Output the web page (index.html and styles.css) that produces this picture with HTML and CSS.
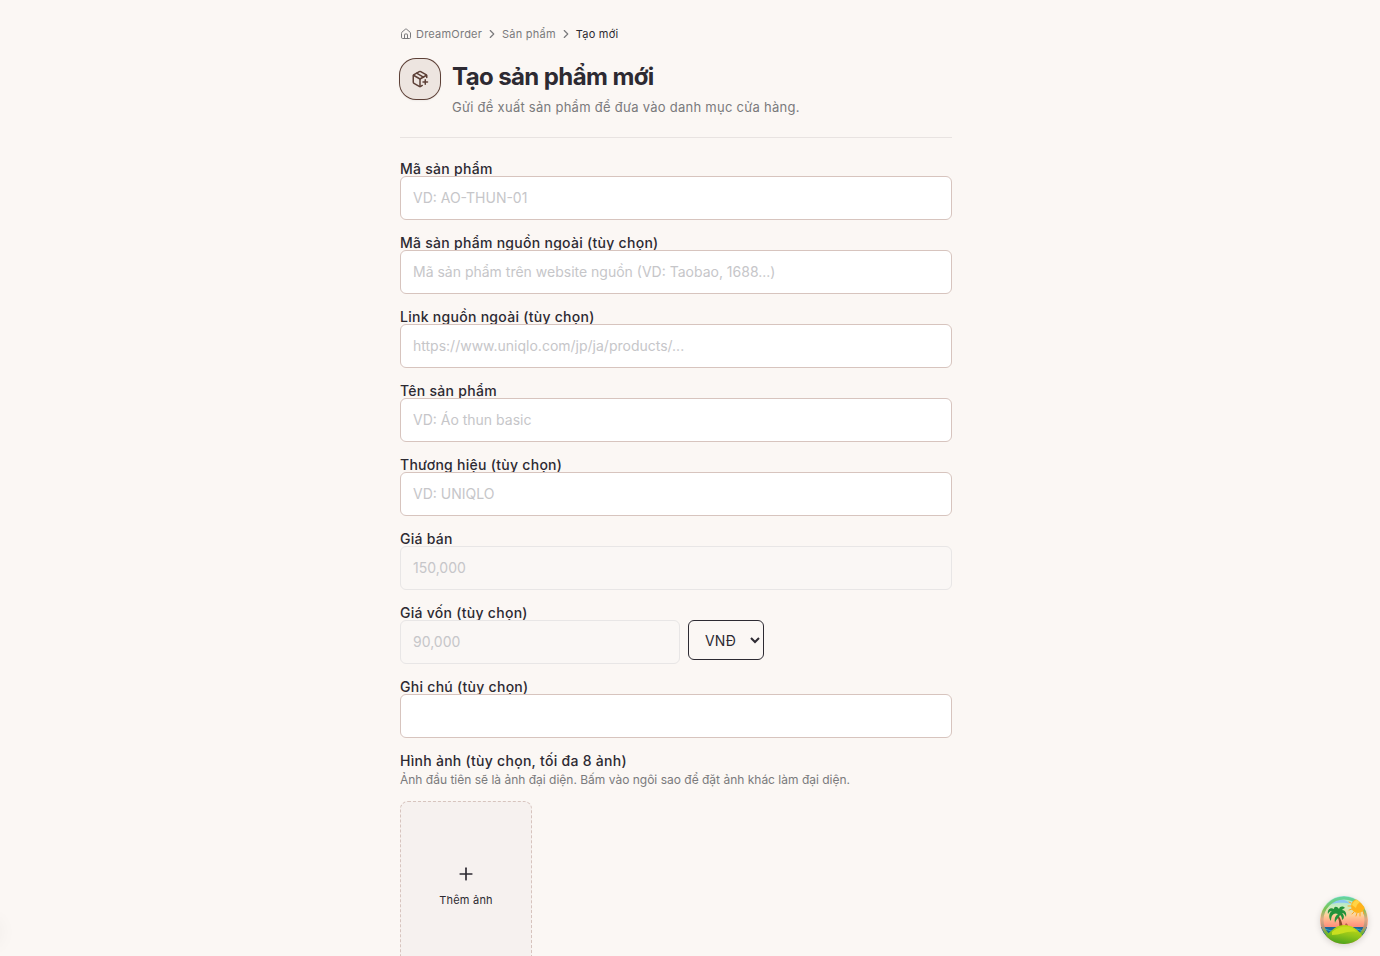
FILE: index.html
```html
<!DOCTYPE html>
<html lang="vi">
<head>
  <meta charset="UTF-8">
  <meta name="viewport" content="width=device-width, initial-scale=1">
  <title>Tạo sản phẩm mới - DreamOrder</title>
  <link rel="stylesheet" href="styles.css">
</head>
<body>
  <main class="page">
    <nav class="breadcrumb" aria-label="Breadcrumb">
      <a class="breadcrumb-home" href="#">
        <svg class="icon-home" viewBox="0 0 24 24"><path d="M15 21v-8a1 1 0 0 0-1-1h-4a1 1 0 0 0-1 1v8"/><path d="M3 10a2 2 0 0 1 .709-1.528l7-6a2 2 0 0 1 2.582 0l7 6A2 2 0 0 1 21 10v9a2 2 0 0 1-2 2H5a2 2 0 0 1-2-2z"/></svg>
        DreamOrder
      </a>
      <svg class="icon-chevron" viewBox="0 0 24 24"><path d="m9 18 6-6-6-6"/></svg>
      <a href="#">Sản phẩm</a>
      <svg class="icon-chevron" viewBox="0 0 24 24"><path d="m9 18 6-6-6-6"/></svg>
      <span class="breadcrumb-current">Tạo mới</span>
    </nav>

    <header class="page-header">
      <div class="header-icon">
        <svg viewBox="0 0 24 24"><path d="M16 16h6"/><path d="M19 13v6"/><path d="M21 10V8a2 2 0 0 0-1-1.730l-7-4a2 2 0 0 0-2 0l-7 4A2 2 0 0 0 3 8v8a2 2 0 0 0 1 1.730l7 4a2 2 0 0 0 2 0l2-1.140"/><path d="m7.500 4.270 9 5.150"/><path d="M3.290 7 12 12l8.710-5"/><path d="M12 22V12"/></svg>
      </div>
      <div class="header-text">
        <h1>Tạo sản phẩm mới</h1>
        <p>Gửi đề xuất sản phẩm để đưa vào danh mục cửa hàng.</p>
      </div>
    </header>

    <form class="product-form">
      <div class="field">
        <label for="code">Mã sản phẩm</label>
        <input id="code" type="text" placeholder="VD: AO-THUN-01">
      </div>
      <div class="field">
        <label for="externalCode">Mã sản phẩm nguồn ngoài (tùy chọn)</label>
        <input id="externalCode" type="text" placeholder="Mã sản phẩm trên website nguồn (VD: Taobao, 1688...)">
      </div>
      <div class="field">
        <label for="externalLink">Link nguồn ngoài (tùy chọn)</label>
        <input id="externalLink" type="text" placeholder="https://www.uniqlo.com/jp/ja/products/...">
      </div>
      <div class="field">
        <label for="name">Tên sản phẩm</label>
        <input id="name" type="text" placeholder="VD: Áo thun basic">
      </div>
      <div class="field">
        <label for="brand">Thương hiệu (tùy chọn)</label>
        <input id="brand" type="text" placeholder="VD: UNIQLO">
      </div>
      <div class="field">
        <label for="price">Giá bán</label>
        <input id="price" type="text" placeholder="150,000" disabled>
      </div>
      <div class="field">
        <label for="cost">Giá vốn (tùy chọn)</label>
        <div class="cost-row">
          <input id="cost" type="text" placeholder="90,000" disabled>
          <select aria-label="Tiền tệ">
            <option>VNĐ</option>
            <option>JPY</option>
            <option>USD</option>
          </select>
        </div>
      </div>
      <div class="field">
        <label for="note">Ghi chú (tùy chọn)</label>
        <input id="note" type="text">
      </div>
      <div class="field">
        <label for="images">Hình ảnh (tùy chọn, tối đa 8 ảnh)</label>
        <p class="hint">Ảnh đầu tiên sẽ là ảnh đại diện. Bấm vào ngôi sao để đặt ảnh khác làm đại diện.</p>
        <div class="image-grid">
          <button id="images" class="add-image" type="button">
            <svg viewBox="0 0 24 24"><path d="M5 12h14"/><path d="M12 5v14"/></svg>
            <span>Thêm ảnh</span>
          </button>
        </div>
      </div>
    </form>
  </main>

  <div class="edge-glow"></div>

  <button class="devtools-button" type="button" aria-label="Devtools">
    <svg viewBox="0 0 48 48">
      <defs>
        <linearGradient id="sky" x1="0" y1="0" x2="0" y2="1">
          <stop offset="0" stop-color="#8fe0d8"/>
          <stop offset=".22" stop-color="#c9ecc0"/>
          <stop offset=".4" stop-color="#ffd09a"/>
          <stop offset=".66" stop-color="#ff8877"/>
        </linearGradient>
        <linearGradient id="rim" x1="0" y1="0" x2="0" y2="1">
          <stop offset="0" stop-color="#66d39a"/>
          <stop offset=".25" stop-color="#7cc356"/>
          <stop offset=".48" stop-color="#e0a887"/>
          <stop offset=".66" stop-color="#b5957a"/>
          <stop offset=".8" stop-color="#6fb52e"/>
          <stop offset="1" stop-color="#8ecb14"/>
        </linearGradient>
        <linearGradient id="hill" x1=".7" y1="0" x2=".3" y2="1">
          <stop offset="0" stop-color="#cfdc14"/>
          <stop offset=".5" stop-color="#8cc31a"/>
          <stop offset="1" stop-color="#3f9c1e"/>
        </linearGradient>
        <clipPath id="disc"><circle cx="24" cy="24" r="24"/></clipPath>
      </defs>
      <g clip-path="url(#disc)">
        <path fill="url(#sky)" d="M0 0h48v48H0z"/>
        <path fill="#8cc6f2" d="M11 8c4-5 15-6 19 0-6-2-13-1-19 0z"/>
        <path fill="#1d6797" d="M0 31h48v9H0z"/>
        <path fill="none" stroke="#2fa9c4" stroke-width="1" d="M2 34q3-2 6 0t6 0M34 34q3-2 6 0t6 0M2 37q3-2 6 0M38 37q3-2 6 0"/>
        <circle cx="24" cy="24" r="22" fill="none" stroke="url(#rim)" stroke-width="3"/>
        <g stroke="#ffa51f" stroke-width="1" stroke-linecap="round"><path d="M29 6l2 1M28 10h3M29 14l3-1M32 18l2-2M36 20l1-3M40 20v-3M44 18l-1-3"/></g>
        <circle cx="38" cy="10" r="7" fill="#ffb31c"/>
        <path fill="#ffd445" d="M32 9a7 7 0 0 1 11-4c-4 1-6 3-7 7z"/>
        <path fill="#8c4a2b" d="M18 19c3 4 5 9 5 16h-4c1-7 0-12-2-15z"/>
        <path fill="#b75c45" d="M25 33v-4l1-2 2 2v4z"/>
        <path fill="#23923a" d="M18 18c-4-2-7 1-7 7-3-4-2-8 1-10-2 0-3 1-4 3-1-5 3-7 6-5 0-3 3-3 5 0 1-3 4-3 6-1-1 0-2 1-3 2 3 0 5 3 4 7-1-2-2-4-4-4 3 3 2 6 0 7 0-3-1-4-2-5-1 3-4 4-5 8-1-4 0-7 3-9z"/>
        <path fill="url(#hill)" d="M4 41c3-1 4-4 7-6 4-4 8-6 13-6 8 0 13 4 17 9 1 2 3 2 3 3l-6 8H9z"/>
        <path fill="#c9df20" d="M12 36c6-6 19-8 25 0-9-2-15 3-25 3z"/>
      </g>
    </svg>
  </button>
</body>
</html>
```

FILE: styles.css
```css
* {
  box-sizing: border-box;
}

body {
  margin: 0;
  padding-right: 28px;
  background-color: #fbf7f4;
  color: #2d2a32;
  font-family: Inter, "Liberation Sans", sans-serif;
  font-size: 14px;
}

h1,
p {
  margin: 0;
}

svg {
  display: block;
  flex-shrink: 0;
  fill: none;
  stroke: currentColor;
  stroke-width: 2;
  stroke-linecap: round;
  stroke-linejoin: round;
}

input,
select,
button {
  font: inherit;
  color: inherit;
}

.page {
  max-width: 600px;
  margin: 0 auto;
  padding: 26px 24px 48px;
}

/* Breadcrumb */
.breadcrumb {
  display: flex;
  align-items: center;
  gap: 3px;
  color: #7a7a7c;
  font-size: 11px;
  line-height: 16px;
  letter-spacing: 0.02em;
}

.breadcrumb a {
  color: inherit;
  text-decoration: none;
}

.breadcrumb-home {
  display: flex;
  align-items: center;
  gap: 4px;
}

.breadcrumb-current {
  color: #2d2a32;
}

.icon-home {
  width: 12px;
  height: 12px;
}

.icon-chevron {
  width: 14px;
  height: 14px;
}

/* Header */
.page-header {
  display: flex;
  gap: 12px;
  margin-top: 17px;
  padding-bottom: 20px;
  border-bottom: 1px solid #e8e3e1;
}

.header-icon {
  display: flex;
  align-items: center;
  justify-content: center;
  flex-shrink: 0;
  width: 40px;
  height: 40px;
  border-radius: 16px;
  background-color: #ede5e0;
  color: #5d4037;
  box-shadow: 0 0 0 1px #5d4037, 0 1px 2px 1px rgba(0, 0, 0, 0.05);
}

.header-icon svg {
  width: 18px;
  height: 18px;
}

.header-text h1 {
  font-size: 24px;
  font-weight: 700;
  line-height: 36px;
  letter-spacing: -0.025em;
}

.header-text p {
  margin-top: 2px;
  color: #7a7a7c;
  font-size: 13px;
  line-height: 20px;
  letter-spacing: 0.02em;
}

/* Form */
.product-form {
  display: flex;
  flex-direction: column;
  gap: 16px;
  margin-top: 24px;
}

.field {
  display: flex;
  flex-direction: column;
}

.field label {
  font-weight: 500;
  line-height: 14px;
  letter-spacing: 0.02em;
}

.field input {
  width: 100%;
  height: 44px;
  padding: 0 12px 2px;
  border: 1px solid #d7c4be;
  border-radius: 6px;
  background-color: #fff;
}

.field input::placeholder {
  color: #c6c6c9;
  opacity: 1;
}

.field input:disabled {
  border-color: #e8e6e6;
  background-color: #faf7f5;
}

.cost-row {
  display: flex;
  align-items: flex-start;
  gap: 8px;
}

.cost-row input {
  max-width: 280px;
}

.cost-row select {
  width: 76px;
  height: 40px;
  padding: 0 0 0 12px;
  border: 1px solid #2d2a32;
  border-radius: 6px;
  background-color: transparent;
}

.hint {
  margin-top: 3px;
  color: #7a7a7c;
  font-size: 12px;
  line-height: 18px;
}

.image-grid {
  display: grid;
  grid-template-columns: repeat(4, 1fr);
  gap: 8px;
  margin-top: 12px;
}

.add-image {
  display: flex;
  flex-direction: column;
  align-items: center;
  justify-content: center;
  gap: 8px;
  aspect-ratio: 7 / 9;
  border: 1px dashed #d7c4be;
  border-radius: 8px;
  background-color: #f6f1ef;
  font-size: 11px;
  line-height: 16px;
  letter-spacing: 0.02em;
}

.add-image svg {
  width: 20px;
  height: 20px;
}

/* Shadow of the collapsed panel that sits past the left edge */
.edge-glow {
  position: fixed;
  bottom: 12px;
  left: -24px;
  width: 24px;
  height: 24px;
  border-radius: 12px;
  box-shadow: 0 0 20px rgba(0, 0, 0, 0.06);
}

.devtools-button {
  position: fixed;
  right: 12px;
  bottom: 12px;
  width: 48px;
  height: 48px;
  padding: 0;
  border: 0;
  border-radius: 50%;
  background: none;
  box-shadow: 0 2px 6px rgba(0, 0, 0, 0.15);
}

.devtools-button svg {
  width: 100%;
  height: 100%;
  stroke: none;
}
```
